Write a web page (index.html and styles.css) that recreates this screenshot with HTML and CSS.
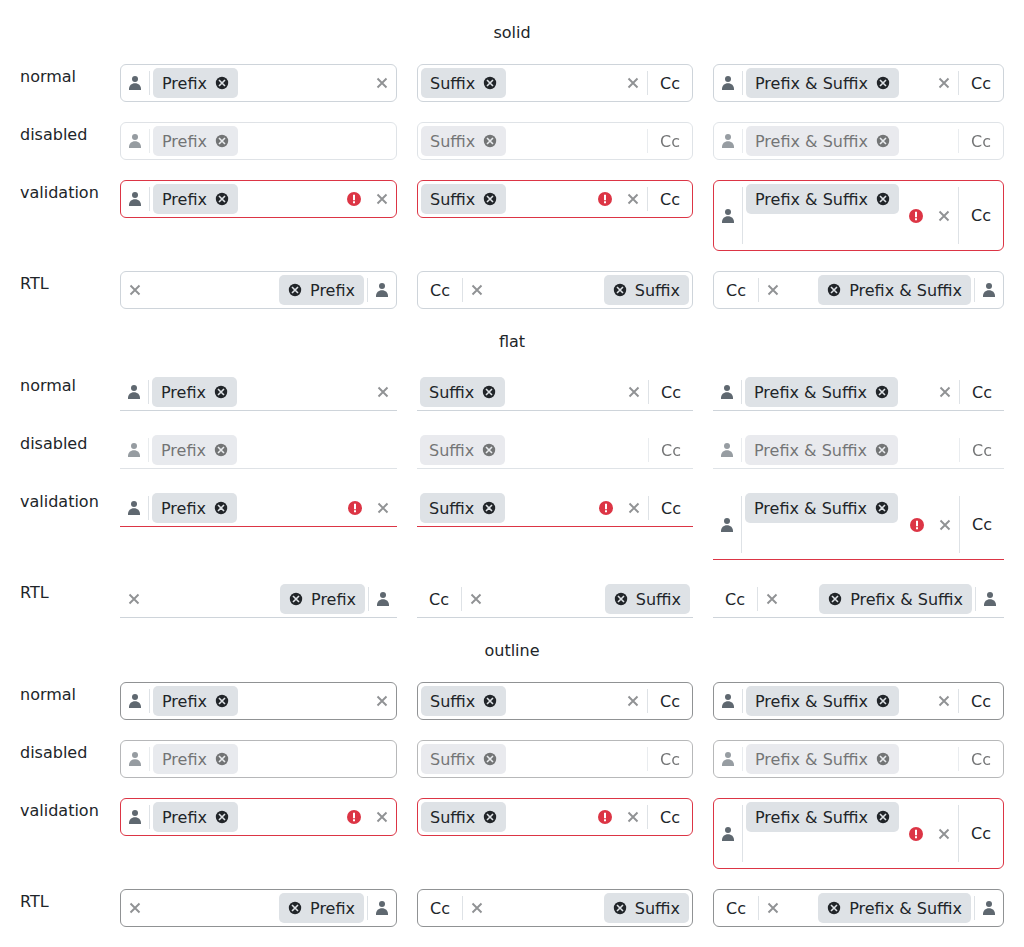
FILE: index.html
```html
<!DOCTYPE html>
<html lang="en">
<head>
<meta charset="utf-8">
<title>Tag box prefix and suffix</title>
<link rel="stylesheet" href="styles.css">
</head>
<body>
<svg class="sprite" aria-hidden="true">
  <symbol id="user" viewBox="0 0 14 14"><circle cx="7" cy="3" r="3"/><path d="M1 14v-.8C1 9.500 3.500 7.300 7 7.300s6 2.200 6 5.900v.8z"/></symbol>
  <symbol id="remove" viewBox="0 0 14 14"><circle cx="7" cy="7" r="6.200"/><path class="cross" d="M4 4l6 6M10 4l-6 6"/></symbol>
  <symbol id="clear" viewBox="0 0 14 14"><path class="line" d="M2.500 2.500l9 9M11.500 2.500l-9 9"/></symbol>
  <symbol id="error" viewBox="0 0 14 14"><circle cx="7" cy="7" r="7"/><path class="mark" d="M6 2.700h2v5.500H6zM6 9.300h2v2H6z"/></symbol>
</svg>
<main class="grid">
  <h2 class="title">solid</h2>

  <div class="label">normal</div>
  <div class="field"><span class="prefix"><svg class="icon"><use href="#user"/></svg></span><div class="tags"><span class="tag">Prefix<svg class="icon"><use href="#remove"/></svg></span></div><svg class="icon clear"><use href="#clear"/></svg></div>
  <div class="field"><div class="tags"><span class="tag">Suffix<svg class="icon"><use href="#remove"/></svg></span></div><svg class="icon clear"><use href="#clear"/></svg><span class="suffix">Cc</span></div>
  <div class="field"><span class="prefix"><svg class="icon"><use href="#user"/></svg></span><div class="tags"><span class="tag">Prefix &amp; Suffix<svg class="icon"><use href="#remove"/></svg></span></div><svg class="icon clear"><use href="#clear"/></svg><span class="suffix">Cc</span></div>

  <div class="label">disabled</div>
  <div class="field disabled"><span class="prefix"><svg class="icon"><use href="#user"/></svg></span><div class="tags"><span class="tag">Prefix<svg class="icon"><use href="#remove"/></svg></span></div></div>
  <div class="field disabled"><div class="tags"><span class="tag">Suffix<svg class="icon"><use href="#remove"/></svg></span></div><span class="suffix">Cc</span></div>
  <div class="field disabled"><span class="prefix"><svg class="icon"><use href="#user"/></svg></span><div class="tags"><span class="tag">Prefix &amp; Suffix<svg class="icon"><use href="#remove"/></svg></span></div><span class="suffix">Cc</span></div>

  <div class="label">validation</div>
  <div class="field invalid"><span class="prefix"><svg class="icon"><use href="#user"/></svg></span><div class="tags"><span class="tag">Prefix<svg class="icon"><use href="#remove"/></svg></span></div><svg class="icon error"><use href="#error"/></svg><svg class="icon clear"><use href="#clear"/></svg></div>
  <div class="field invalid"><div class="tags"><span class="tag">Suffix<svg class="icon"><use href="#remove"/></svg></span></div><svg class="icon error"><use href="#error"/></svg><svg class="icon clear"><use href="#clear"/></svg><span class="suffix">Cc</span></div>
  <div class="field invalid multiline"><span class="prefix"><svg class="icon"><use href="#user"/></svg></span><div class="tags"><span class="tag">Prefix &amp; Suffix<svg class="icon"><use href="#remove"/></svg></span></div><svg class="icon error"><use href="#error"/></svg><svg class="icon clear"><use href="#clear"/></svg><span class="suffix">Cc</span></div>

  <div class="label">RTL</div>
  <div class="field" dir="rtl"><span class="prefix"><svg class="icon"><use href="#user"/></svg></span><div class="tags"><span class="tag">Prefix<svg class="icon"><use href="#remove"/></svg></span></div><svg class="icon clear"><use href="#clear"/></svg></div>
  <div class="field" dir="rtl"><div class="tags"><span class="tag">Suffix<svg class="icon"><use href="#remove"/></svg></span></div><svg class="icon clear"><use href="#clear"/></svg><span class="suffix">Cc</span></div>
  <div class="field" dir="rtl"><span class="prefix"><svg class="icon"><use href="#user"/></svg></span><div class="tags"><span class="tag">Prefix &amp; Suffix<svg class="icon"><use href="#remove"/></svg></span></div><svg class="icon clear"><use href="#clear"/></svg><span class="suffix">Cc</span></div>

  <h2 class="title">flat</h2>

  <div class="label">normal</div>
  <div class="field flat"><span class="prefix"><svg class="icon"><use href="#user"/></svg></span><div class="tags"><span class="tag">Prefix<svg class="icon"><use href="#remove"/></svg></span></div><svg class="icon clear"><use href="#clear"/></svg></div>
  <div class="field flat"><div class="tags"><span class="tag">Suffix<svg class="icon"><use href="#remove"/></svg></span></div><svg class="icon clear"><use href="#clear"/></svg><span class="suffix">Cc</span></div>
  <div class="field flat"><span class="prefix"><svg class="icon"><use href="#user"/></svg></span><div class="tags"><span class="tag">Prefix &amp; Suffix<svg class="icon"><use href="#remove"/></svg></span></div><svg class="icon clear"><use href="#clear"/></svg><span class="suffix">Cc</span></div>

  <div class="label">disabled</div>
  <div class="field flat disabled"><span class="prefix"><svg class="icon"><use href="#user"/></svg></span><div class="tags"><span class="tag">Prefix<svg class="icon"><use href="#remove"/></svg></span></div></div>
  <div class="field flat disabled"><div class="tags"><span class="tag">Suffix<svg class="icon"><use href="#remove"/></svg></span></div><span class="suffix">Cc</span></div>
  <div class="field flat disabled"><span class="prefix"><svg class="icon"><use href="#user"/></svg></span><div class="tags"><span class="tag">Prefix &amp; Suffix<svg class="icon"><use href="#remove"/></svg></span></div><span class="suffix">Cc</span></div>

  <div class="label">validation</div>
  <div class="field flat invalid"><span class="prefix"><svg class="icon"><use href="#user"/></svg></span><div class="tags"><span class="tag">Prefix<svg class="icon"><use href="#remove"/></svg></span></div><svg class="icon error"><use href="#error"/></svg><svg class="icon clear"><use href="#clear"/></svg></div>
  <div class="field flat invalid"><div class="tags"><span class="tag">Suffix<svg class="icon"><use href="#remove"/></svg></span></div><svg class="icon error"><use href="#error"/></svg><svg class="icon clear"><use href="#clear"/></svg><span class="suffix">Cc</span></div>
  <div class="field flat invalid multiline"><span class="prefix"><svg class="icon"><use href="#user"/></svg></span><div class="tags"><span class="tag">Prefix &amp; Suffix<svg class="icon"><use href="#remove"/></svg></span></div><svg class="icon error"><use href="#error"/></svg><svg class="icon clear"><use href="#clear"/></svg><span class="suffix">Cc</span></div>

  <div class="label">RTL</div>
  <div class="field flat" dir="rtl"><span class="prefix"><svg class="icon"><use href="#user"/></svg></span><div class="tags"><span class="tag">Prefix<svg class="icon"><use href="#remove"/></svg></span></div><svg class="icon clear"><use href="#clear"/></svg></div>
  <div class="field flat" dir="rtl"><div class="tags"><span class="tag">Suffix<svg class="icon"><use href="#remove"/></svg></span></div><svg class="icon clear"><use href="#clear"/></svg><span class="suffix">Cc</span></div>
  <div class="field flat" dir="rtl"><span class="prefix"><svg class="icon"><use href="#user"/></svg></span><div class="tags"><span class="tag">Prefix &amp; Suffix<svg class="icon"><use href="#remove"/></svg></span></div><svg class="icon clear"><use href="#clear"/></svg><span class="suffix">Cc</span></div>

  <h2 class="title">outline</h2>

  <div class="label">normal</div>
  <div class="field outline"><span class="prefix"><svg class="icon"><use href="#user"/></svg></span><div class="tags"><span class="tag">Prefix<svg class="icon"><use href="#remove"/></svg></span></div><svg class="icon clear"><use href="#clear"/></svg></div>
  <div class="field outline"><div class="tags"><span class="tag">Suffix<svg class="icon"><use href="#remove"/></svg></span></div><svg class="icon clear"><use href="#clear"/></svg><span class="suffix">Cc</span></div>
  <div class="field outline"><span class="prefix"><svg class="icon"><use href="#user"/></svg></span><div class="tags"><span class="tag">Prefix &amp; Suffix<svg class="icon"><use href="#remove"/></svg></span></div><svg class="icon clear"><use href="#clear"/></svg><span class="suffix">Cc</span></div>

  <div class="label">disabled</div>
  <div class="field outline disabled"><span class="prefix"><svg class="icon"><use href="#user"/></svg></span><div class="tags"><span class="tag">Prefix<svg class="icon"><use href="#remove"/></svg></span></div></div>
  <div class="field outline disabled"><div class="tags"><span class="tag">Suffix<svg class="icon"><use href="#remove"/></svg></span></div><span class="suffix">Cc</span></div>
  <div class="field outline disabled"><span class="prefix"><svg class="icon"><use href="#user"/></svg></span><div class="tags"><span class="tag">Prefix &amp; Suffix<svg class="icon"><use href="#remove"/></svg></span></div><span class="suffix">Cc</span></div>

  <div class="label">validation</div>
  <div class="field outline invalid"><span class="prefix"><svg class="icon"><use href="#user"/></svg></span><div class="tags"><span class="tag">Prefix<svg class="icon"><use href="#remove"/></svg></span></div><svg class="icon error"><use href="#error"/></svg><svg class="icon clear"><use href="#clear"/></svg></div>
  <div class="field outline invalid"><div class="tags"><span class="tag">Suffix<svg class="icon"><use href="#remove"/></svg></span></div><svg class="icon error"><use href="#error"/></svg><svg class="icon clear"><use href="#clear"/></svg><span class="suffix">Cc</span></div>
  <div class="field outline invalid multiline"><span class="prefix"><svg class="icon"><use href="#user"/></svg></span><div class="tags"><span class="tag">Prefix &amp; Suffix<svg class="icon"><use href="#remove"/></svg></span></div><svg class="icon error"><use href="#error"/></svg><svg class="icon clear"><use href="#clear"/></svg><span class="suffix">Cc</span></div>

  <div class="label">RTL</div>
  <div class="field outline" dir="rtl"><span class="prefix"><svg class="icon"><use href="#user"/></svg></span><div class="tags"><span class="tag">Prefix<svg class="icon"><use href="#remove"/></svg></span></div><svg class="icon clear"><use href="#clear"/></svg></div>
  <div class="field outline" dir="rtl"><div class="tags"><span class="tag">Suffix<svg class="icon"><use href="#remove"/></svg></span></div><svg class="icon clear"><use href="#clear"/></svg><span class="suffix">Cc</span></div>
  <div class="field outline" dir="rtl"><span class="prefix"><svg class="icon"><use href="#user"/></svg></span><div class="tags"><span class="tag">Prefix &amp; Suffix<svg class="icon"><use href="#remove"/></svg></span></div><svg class="icon clear"><use href="#clear"/></svg><span class="suffix">Cc</span></div>
</main>
</body>
</html>
```

FILE: styles.css
```css
* {
  box-sizing: border-box;
}

body {
  margin: 0;
  background: #fff;
  color: #212529;
  font: 16px/24px "DejaVu Sans", sans-serif;
}

.sprite {
  display: none;
}

.grid {
  display: grid;
  grid-template-columns: 80px 277px 276px 291px;
  gap: 20px;
  align-items: start;
  padding: 20px;
}

.title {
  grid-column: 1 / -1;
  height: 24px;
  margin: 0;
  padding-top: 1px;
  font-size: 16px;
  font-weight: 400;
  text-align: center;
}

.label {
  padding-top: 1px;
  white-space: nowrap;
}

.field {
  display: flex;
  align-items: center;
  height: 38px;
  border: 1px solid #ced4da;
  border-radius: 6px;
}

.outline {
  border-color: #909294;
}

.flat {
  border-width: 1px 0;
  border-top-color: transparent;
  border-radius: 0;
}

.invalid {
  border-color: #dc3545;
}

.flat.invalid {
  border-top-color: transparent;
}

.disabled {
  color: #282a2c;
  opacity: 0.65;
}

.multiline {
  height: 71px;
}

.icon {
  flex: none;
  display: block;
  width: 14px;
  height: 14px;
  fill: currentColor;
}

.prefix,
.suffix {
  display: flex;
  flex: none;
  align-self: stretch;
  align-items: center;
  margin: 6px 0;
}

.prefix {
  padding: 0 7px;
  border-inline-end: 1px solid #dee2e6;
  color: #5f6870;
}

.suffix {
  padding: 2px 12px 0;
  border-inline-start: 1px solid #dee2e6;
}

.multiline .suffix {
  padding-top: 0;
}

.tags {
  flex: 1;
  align-self: flex-start;
  display: flex;
  padding: 3px;
}

.tag {
  display: flex;
  align-items: center;
  gap: 8px;
  height: 30px;
  padding: 2px 9px 0;
  border-radius: 5px;
  background: #dee2e6;
  white-space: nowrap;
}

.tag .icon {
  margin-bottom: 2px;
}

.disabled .tag {
  background: #dddfe5;
}

.clear,
.error {
  margin: 0 7px;
}

.clear {
  color: #909294;
}

.error {
  color: #dc3545;
}

.cross {
  fill: none;
  stroke: #dee2e6;
  stroke-width: 1.6;
}

.line {
  fill: none;
  stroke: currentColor;
  stroke-width: 1.9;
}

.mark {
  fill: #fff;
}
```
